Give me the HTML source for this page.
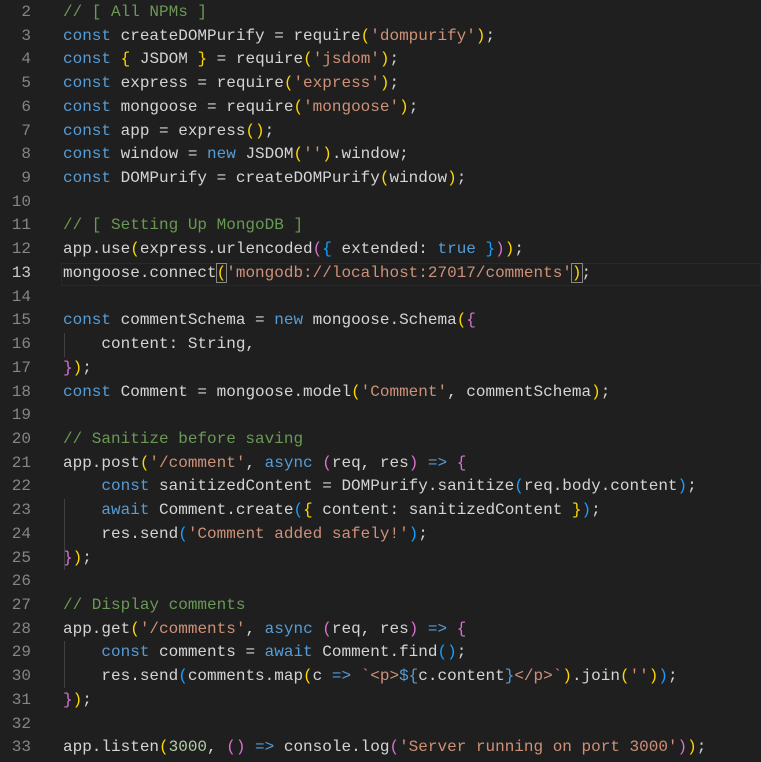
<!DOCTYPE html>
<html><head><meta charset="utf-8"><style>
html,body{margin:0;padding:0;background:#1f1f1f;width:761px;height:762px;overflow:hidden}
.ed{position:relative;top:1px;font-family:"Liberation Mono",monospace;font-size:16px;line-height:23.72px;color:#d4d4d4}
.l{position:relative;height:23.72px}
.n{position:absolute;left:0;width:31px;text-align:right;color:#858585}
.n.c{color:#cccccc}
.t{position:absolute;left:63px;white-space:pre}
.k{color:#569cd6}.s{color:#ce9178}.m{color:#6a9955}.num{color:#b5cea8}
.y{color:#ffd700}.p{color:#da70d6}.b{color:#179fff}
.g{position:absolute;left:64px;width:1px;background:#404040}
.cur{position:absolute;left:61px;right:0;height:21px;top:1px;border:1px solid #282828}
</style></head><body><div class="ed">
<div class="l"><span class="n">2</span><span class="t m">// [ All NPMs ]</span></div>
<div class="l"><span class="n">3</span><span class="t"><span class="k">const</span> createDOMPurify = require<span class="y">(</span><span class="s">'dompurify'</span><span class="y">)</span>;</span></div>
<div class="l"><span class="n">4</span><span class="t"><span class="k">const</span> <span class="y">{</span> JSDOM <span class="y">}</span> = require<span class="y">(</span><span class="s">'jsdom'</span><span class="y">)</span>;</span></div>
<div class="l"><span class="n">5</span><span class="t"><span class="k">const</span> express = require<span class="y">(</span><span class="s">'express'</span><span class="y">)</span>;</span></div>
<div class="l"><span class="n">6</span><span class="t"><span class="k">const</span> mongoose = require<span class="y">(</span><span class="s">'mongoose'</span><span class="y">)</span>;</span></div>
<div class="l"><span class="n">7</span><span class="t"><span class="k">const</span> app = express<span class="y">()</span>;</span></div>
<div class="l"><span class="n">8</span><span class="t"><span class="k">const</span> window = <span class="k">new</span> JSDOM<span class="y">(</span><span class="s">''</span><span class="y">)</span>.window;</span></div>
<div class="l"><span class="n">9</span><span class="t"><span class="k">const</span> DOMPurify = createDOMPurify<span class="y">(</span>window<span class="y">)</span>;</span></div>
<div class="l"><span class="n">10</span></div>
<div class="l"><span class="n">11</span><span class="t m">// [ Setting Up MongoDB ]</span></div>
<div class="l"><span class="n">12</span><span class="t">app.use<span class="y">(</span>express.urlencoded<span class="p">(</span><span class="b">{</span> extended: <span class="k">true</span> <span class="b">}</span><span class="p">)</span><span class="y">)</span>;</span></div>
<div class="l"><div class="cur"></div><span class="n c">13</span><span class="t">mongoose.connect<span class="y" style="outline:1px solid #888">(</span><span class="s">'mongodb://localhost:27017/comments'</span><span class="y" style="outline:1px solid #888">)</span>;</span></div>
<div class="l"><span class="n">14</span></div>
<div class="l"><span class="n">15</span><span class="t"><span class="k">const</span> commentSchema = <span class="k">new</span> mongoose.Schema<span class="y">(</span><span class="p">{</span></span></div>
<div class="l"><span class="n">16</span><span class="t">    content: String,</span></div>
<div class="l"><span class="n">17</span><span class="t"><span class="p">}</span><span class="y">)</span>;</span></div>
<div class="l"><span class="n">18</span><span class="t"><span class="k">const</span> Comment = mongoose.model<span class="y">(</span><span class="s">'Comment'</span>, commentSchema<span class="y">)</span>;</span></div>
<div class="l"><span class="n">19</span></div>
<div class="l"><span class="n">20</span><span class="t m">// Sanitize before saving</span></div>
<div class="l"><span class="n">21</span><span class="t">app.post<span class="y">(</span><span class="s">'/comment'</span>, <span class="k">async</span> <span class="p">(</span>req, res<span class="p">)</span> <span class="k">=&gt;</span> <span class="p">{</span></span></div>
<div class="l"><span class="n">22</span><span class="t">    <span class="k">const</span> sanitizedContent = DOMPurify.sanitize<span class="b">(</span>req.body.content<span class="b">)</span>;</span></div>
<div class="l"><span class="n">23</span><span class="t">    <span class="k">await</span> Comment.create<span class="b">(</span><span class="y">{</span> content: sanitizedContent <span class="y">}</span><span class="b">)</span>;</span></div>
<div class="l"><span class="n">24</span><span class="t">    res.send<span class="b">(</span><span class="s">'Comment added safely!'</span><span class="b">)</span>;</span></div>
<div class="l"><span class="n">25</span><span class="t"><span class="p">}</span><span class="y">)</span>;</span></div>
<div class="l"><span class="n">26</span></div>
<div class="l"><span class="n">27</span><span class="t m">// Display comments</span></div>
<div class="l"><span class="n">28</span><span class="t">app.get<span class="y">(</span><span class="s">'/comments'</span>, <span class="k">async</span> <span class="p">(</span>req, res<span class="p">)</span> <span class="k">=&gt;</span> <span class="p">{</span></span></div>
<div class="l"><span class="n">29</span><span class="t">    <span class="k">const</span> comments = <span class="k">await</span> Comment.find<span class="b">()</span>;</span></div>
<div class="l"><span class="n">30</span><span class="t">    res.send<span class="b">(</span>comments.map<span class="y">(</span>c <span class="k">=&gt;</span> <span class="s">`&lt;p&gt;</span><span class="k">${</span>c.content<span class="k">}</span><span class="s">&lt;/p&gt;`</span><span class="y">)</span>.join<span class="y">(</span><span class="s">''</span><span class="y">)</span><span class="b">)</span>;</span></div>
<div class="l"><span class="n">31</span><span class="t"><span class="p">}</span><span class="y">)</span>;</span></div>
<div class="l"><span class="n">32</span></div>
<div class="l"><span class="n">33</span><span class="t">app.listen<span class="y">(</span><span class="num">3000</span>, <span class="p">()</span> <span class="k">=&gt;</span> console.log<span class="p">(</span><span class="s">'Server running on port 3000'</span><span class="p">)</span><span class="y">)</span>;</span></div>
<div class="g" style="top:332px;height:24px"></div>
<div class="g" style="top:498px;height:71px"></div>
<div class="g" style="top:640px;height:47px"></div>
</div></body></html>
